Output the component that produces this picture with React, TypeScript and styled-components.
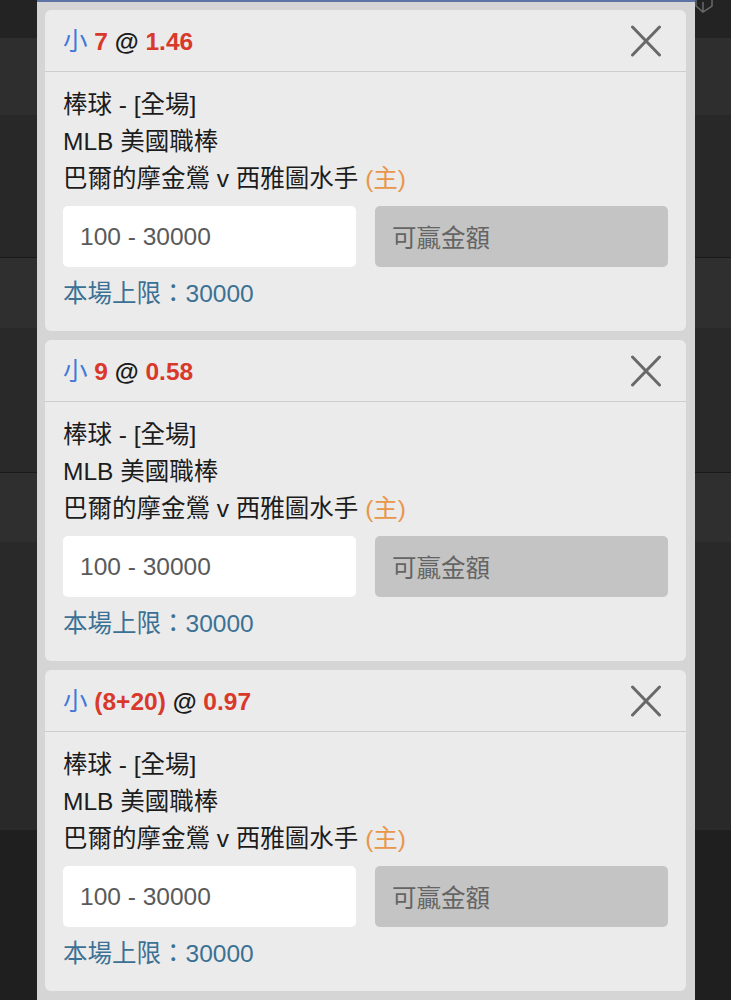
import React from 'react'
import styled, { createGlobalStyle } from 'styled-components'

const GlobalStyle = createGlobalStyle`
    html, body {
        margin: 0;
        padding: 0;
        background: #1f1f1f;
        overflow: hidden;
    }
    body {
        font-family: "Liberation Sans", "Noto Sans CJK TC", sans-serif;
    }
`

interface Bet {
    side: string
    line: string
    odds: string
}

const bets: Bet[] = [
    { side: '小', line: '7', odds: '1.46' },
    { side: '小', line: '9', odds: '0.58' },
    { side: '小', line: '(8+20)', odds: '0.97' },
]

const stripes = [
    { h: 38, c: '#232323' },
    { h: 77, c: '#2e2e2e' },
    { h: 142, c: '#282828' },
    { h: 1, c: '#1a1a1a' },
    { h: 70, c: '#2f2f2f' },
    { h: 144, c: '#292929' },
    { h: 1, c: '#1a1a1a' },
    { h: 69, c: '#2f2f2f' },
    { h: 288, c: '#292929' },
    { h: 170, c: '#1f1f1f' },
]

const CloseIcon = () => (
    <svg width="32" height="32" viewBox="0 0 32 32">
        <path d="M2.5 2 L29.5 30 M29.5 2 L2.5 30" stroke="#696969" strokeWidth="3" strokeLinecap="round" />
    </svg>
)

const BetCard = ({ bet }: { bet: Bet }) => {
    return (
        <Card>
            <CardHeader>
                <Title>
                    <Side>{bet.side}</Side> <Red>{bet.line}</Red> @ <Red>{bet.odds}</Red>
                </Title>
                <CloseButton aria-label="close">
                    <CloseIcon />
                </CloseButton>
            </CardHeader>
            <CardBody>
                <InfoLine>棒球 - [全場]</InfoLine>
                <InfoLine>MLB 美國職棒</InfoLine>
                <InfoLine>
                    巴爾的摩金鶯 v 西雅圖水手 <Home>(主)</Home>
                </InfoLine>
                <Fields>
                    <StakeInput placeholder="100 - 30000" />
                    <Payout>可贏金額</Payout>
                </Fields>
                <Limit>本場上限：30000</Limit>
            </CardBody>
        </Card>
    )
}

const App = () => {
    return (
        <>
            <GlobalStyle />
            <Page>
                {stripes.map((s, i) => (
                    <Stripe key={i} $h={s.h} $c={s.c} />
                ))}
                <CornerIcon width="20" height="16" viewBox="0 0 20 16">
                    <path d="M2 -4 L2 6 L9 12 L18 6 L18 -4 M9 12 L9 2" stroke="#6a6a6a" strokeWidth="1.5" fill="none" />
                </CornerIcon>
                <Slip>
                    {bets.map((b, i) => (
                        <BetCard key={i} bet={b} />
                    ))}
                </Slip>
            </Page>
        </>
    )
}

const Page = styled.div`
    position: relative;
    width: 731px;
    height: 1000px;
    display: flex;
    flex-direction: column;
    overflow: hidden;
`
const Stripe = styled.div<{ $h: number; $c: string }>`
    flex: none;
    height: ${p => p.$h}px;
    background: ${p => p.$c};
`
const CornerIcon = styled.svg`
    position: absolute;
    top: 0;
    left: 694px;
`
const Slip = styled.div`
    position: absolute;
    top: 0;
    left: 37px;
    width: 658px;
    height: 1000px;
    box-sizing: border-box;
    padding: 10px 9px 0 8px;
    background: #d5d5d5;
    border-top: 2px solid #5d74a6;
    display: flex;
    flex-direction: column;
    gap: 9px;
    & > :first-child {
        margin-top: -2px;
    }
`
const Card = styled.div`
    background: #ebebeb;
    border-radius: 6px;
    flex: none;
`
const CardHeader = styled.div`
    height: 62px;
    box-sizing: border-box;
    border-bottom: 1px solid #cdcdcd;
    display: flex;
    align-items: center;
    justify-content: space-between;
    padding: 0 24px 2px 18px;
`
const Title = styled.div`
    font-size: 24.5px;
    font-weight: bold;
    color: #1a1a1a;
`
const Side = styled.span`
    color: #3f78d8;
    font-weight: normal;
`
const Red = styled.span`
    color: #d8392b;
`
const CloseButton = styled.button`
    border: none;
    background: none;
    padding: 0;
    width: 32px;
    height: 32px;
    display: flex;
    margin-top: 3px;
`
const CardBody = styled.div`
    padding: 14px 18px 19px;
`
const InfoLine = styled.div`
    font-size: 24.5px;
    line-height: 37px;
    color: #1c1c1c;
    white-space: nowrap;
`
const Home = styled.span`
    color: #e8964a;
`
const Fields = styled.div`
    display: grid;
    grid-template-columns: 1fr 1fr;
    gap: 19px;
    margin-top: 9px;
`
const StakeInput = styled.input`
    height: 61px;
    box-sizing: border-box;
    border: none;
    border-radius: 5px;
    background: #fff;
    padding: 0 17px;
    font-family: "Liberation Sans", "Noto Sans CJK TC", sans-serif;
    font-size: 24.5px;
    outline: none;
    min-width: 0;
    &::placeholder {
        color: #5a5a5a;
    }
`
const Payout = styled.div`
    height: 61px;
    border-radius: 5px;
    background: #c4c4c4;
    color: #646464;
    font-size: 24.5px;
    display: flex;
    align-items: center;
    padding: 0 17px;
`
const Limit = styled.div`
    margin-top: 9px;
    font-size: 24.5px;
    line-height: 36px;
    color: #3b7194;
`

export default App
